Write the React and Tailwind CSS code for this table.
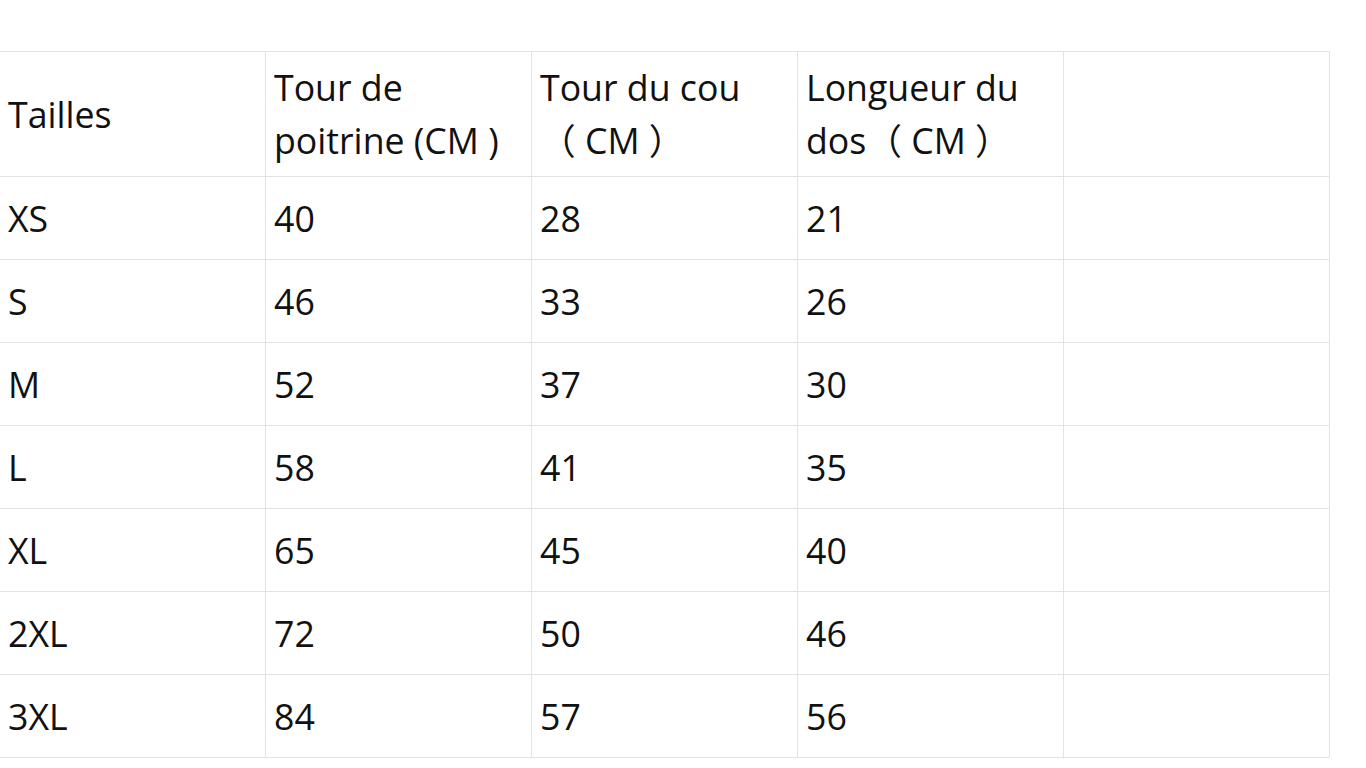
export default function App() {
  const header = [
    "Tailles",
    "Tour de poitrine (CM )",
    <>Tour du cou <span className="whitespace-nowrap">（ CM ）</span></>,
    <>Longueur du <span className="whitespace-nowrap">dos（ CM ）</span></>,
    "",
  ];
  const rows = [
    ["XS", "40", "28", "21", ""],
    ["S", "46", "33", "26", ""],
    ["M", "52", "37", "30", ""],
    ["L", "58", "41", "35", ""],
    ["XL", "65", "45", "40", ""],
    ["2XL", "72", "50", "46", ""],
    ["3XL", "84", "57", "56", ""],
  ];
  return (
    <div className="w-[1366px] h-[768px] bg-white overflow-hidden pt-[51px]" style={{ fontFamily: '"Open Sans", "Noto Sans CJK SC", sans-serif' }}>
      <table className="border-collapse ml-[-1px] table-fixed w-[1331px] text-[35.7px] leading-[53px] text-[#111]">
        <colgroup>
          <col className="w-[266px]" />
          <col className="w-[266px]" />
          <col className="w-[266px]" />
          <col className="w-[266px]" />
          <col className="w-[266px]" />
        </colgroup>
        <thead>
          <tr className="h-[125px]">
            {header.map((h, i) => (
              <td key={i} className="border border-[#e3e3e3] pl-[8px] pr-[8px] align-middle font-normal text-left">{h}</td>
            ))}
          </tr>
        </thead>
        <tbody>
          {rows.map((r, ri) => (
            <tr key={ri} className="h-[83px]">
              {r.map((c, ci) => (
                <td key={ci} className="border border-[#e3e3e3] pl-[8px] pr-[8px] align-middle">{c}</td>
              ))}
            </tr>
          ))}
        </tbody>
      </table>
    </div>
  );
}
